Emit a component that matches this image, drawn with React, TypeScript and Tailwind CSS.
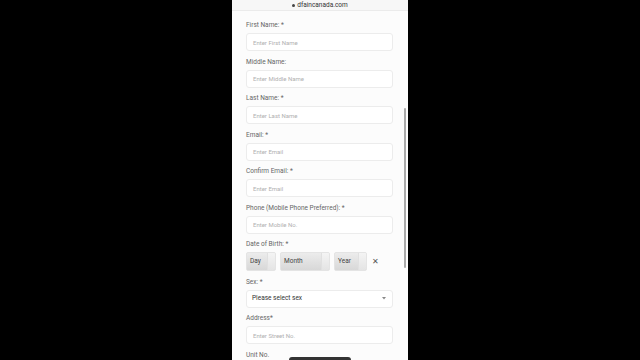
import React from "react";

const font = { fontFamily: "Roboto, 'Open Sans', 'Liberation Sans', sans-serif" };

function Field({ label, placeholder, req = true, star = ": *" }: { label: string; placeholder: string; req?: boolean; star?: string }) {
  return (
    <div className="flex flex-col">
      <div className="h-[8px] text-[6.5px] leading-[8px] text-[#666]">
        {label}
        {req ? star : ":"}
      </div>
      <div className="mt-[4px] h-[18px] rounded-[3px] border border-[#ececec] bg-white flex items-center px-[6px] text-[6px] text-[#b0b0b0]">
        {placeholder}
      </div>
    </div>
  );
}

function Sel({ text, w }: { text: string; w: string }) {
  return (
    <div className={`${w} h-[19px] rounded-[2px] flex items-stretch overflow-hidden bg-gradient-to-b from-[#ececec] to-[#d8d8d8] border border-[#e4e4e4]`}>
      <div className="flex-1 flex items-center pl-[3px] text-[6.5px] text-[#444]">{text}</div>
      <div className="w-[8px] bg-gradient-to-b from-[#f4f4f4] to-[#e4e4e4] border-l border-[#e0e0e0]" />
    </div>
  );
}

export default function App() {
  return (
    <div className="w-[640px] h-[360px] bg-black overflow-hidden" style={font}>
      <div className="relative mx-auto w-[176px] h-[360px] bg-[#fcfcfc] overflow-hidden">
        <div className="h-[11px] bg-[#f7f7f7] border-b border-[#ebebeb] flex items-center justify-center gap-[2px] text-[6.5px] leading-[11px] text-[#333]">
          <span className="w-[3px] h-[3px] rounded-full bg-[#444] inline-block mt-[1px]" />
          <span>dfaincanada.com</span>
        </div>
        <div className="flex flex-col gap-[6.5px] pl-[14px] pr-[15px] pt-[10px]">
          <Field label="First Name" placeholder="Enter First Name" />
          <Field label="Middle Name" placeholder="Enter Middle Name" req={false} />
          <Field label="Last Name" placeholder="Enter Last Name" />
          <Field label="Email" placeholder="Enter Email" />
          <Field label="Confirm Email" placeholder="Enter Email" />
          <Field label="Phone (Mobile Phone Preferred)" placeholder="Enter Mobile No." />
          <div className="flex flex-col">
            <div className="h-[8px] text-[6.5px] leading-[8px] text-[#666]">Date of Birth: *</div>
            <div className="mt-[4px] flex items-center gap-[4px]">
              <Sel text="Day" w="w-[30px]" />
              <Sel text="Month" w="w-[50px]" />
              <Sel text="Year" w="w-[33px]" />
              <span className="ml-[1px] text-[7.5px] text-[#555] leading-none">✕</span>
            </div>
          </div>
          <div className="flex flex-col">
            <div className="h-[8px] text-[6.5px] leading-[8px] text-[#666]">Sex: *</div>
            <div className="mt-[4px] h-[18px] rounded-[3px] border border-[#ececec] bg-white flex items-center justify-between pl-[5px] pr-[6px] text-[6.5px] text-[#333]">
              <span>Please select sex</span>
              <svg width="4" height="3" viewBox="0 0 4 3"><path d="M0 0 L2 2.5 L4 0 Z" fill="#888" /></svg>
            </div>
          </div>
          <Field label="Address" placeholder="Enter Street No." star="*" />
          <div className="h-[8px] text-[6.5px] leading-[8px] text-[#666]">Unit No.</div>
        </div>
        <div className="absolute right-[2px] top-[108px] w-[2px] h-[160px] rounded-full bg-[#aaa]" />
        <div className="absolute left-[57px] bottom-0 w-[62px] h-[3px] rounded-t-full bg-[#333]" />
      </div>
    </div>
  );
}
